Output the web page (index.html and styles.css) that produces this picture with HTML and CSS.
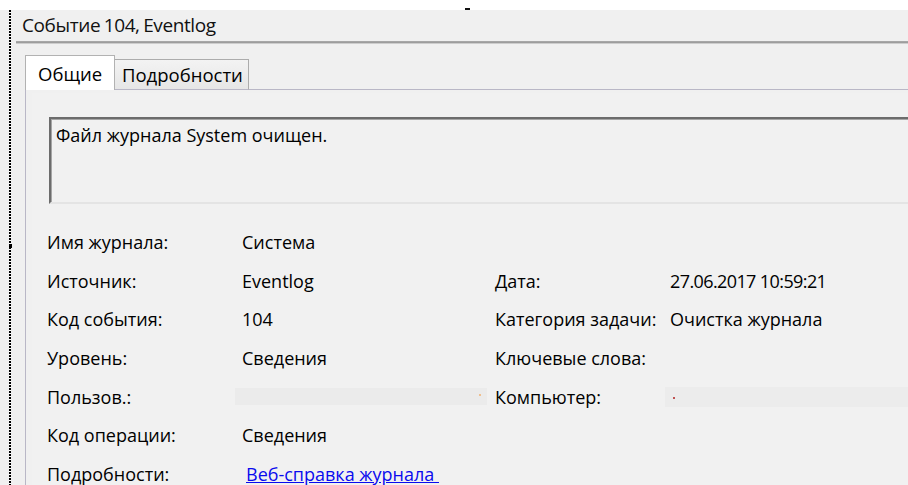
FILE: index.html
```html
<!DOCTYPE html>
<html lang="ru">
<head>
<meta charset="utf-8">
<title>Событие 104, Eventlog</title>
<link rel="stylesheet" href="styles.css">
</head>
<body>
<div class="topstrip"><span class="grip-top"></span></div>
<div class="window">
  <span class="grip-side"></span>
  <div class="caption">Событие 104, Eventlog</div>
  <div class="sep"></div>
  <div class="tabs">
    <div class="tab active">Общие</div>
    <div class="tab">Подробности</div>
    <div class="tab-fill"></div>
  </div>
  <div class="panel">
    <div class="panel-inner">
      <div class="message">Файл журнала System очищен.</div>
      <div class="fields">
        <div class="lbl">Имя журнала:</div><div class="val">Система</div><div class="lbl"></div><div class="val"></div>
        <div class="lbl">Источник:</div><div class="val">Eventlog</div><div class="lbl">Дата:</div><div class="val num">27.06.2017 10:59:21</div>
        <div class="lbl">Код события:</div><div class="val">104</div><div class="lbl">Категория задачи:</div><div class="val">Очистка журнала</div>
        <div class="lbl">Уровень:</div><div class="val">Сведения</div><div class="lbl">Ключевые слова:</div><div class="val"></div>
        <div class="lbl">Пользов.:</div><div class="val"><span class="hidden-user"></span></div><div class="lbl"><span class="speck orange"></span>Компьютер:</div><div class="val"><span class="hidden-host"><span class="speck red"></span></span></div>
        <div class="lbl">Код операции:</div><div class="val">Сведения</div><div class="lbl"></div><div class="val"></div>
        <div class="lbl">Подробности:</div><div class="val"><a class="link" href="#">Веб-справка журнала&nbsp;</a></div><div class="lbl"></div><div class="val"></div>
      </div>
    </div>
  </div>
</div>
</body>
</html>
```
FILE: styles.css
```css
html, body {
  margin: 0;
  padding: 0;
  background: #f0f0f0;
  font-family: "Open Sans", "Noto Sans", sans-serif;
  font-size: 18px;
  color: #000;
  overflow: hidden;
  width: 908px;
  height: 485px;
}

.topstrip {
  height: 10px;
  background: #fff;
  position: relative;
}

.grip-top {
  position: absolute;
  left: 465px;
  top: 8px;
  width: 5px;
  height: 2px;
  background: #111;
}

/* dotted selection edge down the left side */
.window {
  position: relative;
  display: flex;
  flex-direction: column;
  margin-left: 9px;
  padding-left: 2px;
  height: 475px;
  background-image: repeating-linear-gradient(to bottom, #000 0 2px, #fff 2px 3px);
  background-size: 2px 100%;
  background-repeat: no-repeat;
  background-color: #f0f0f0;
}

.grip-side {
  position: absolute;
  left: 0;
  top: 234px;
  width: 3px;
  height: 4px;
  background: #000;
}

.caption {
  height: 31px;
  line-height: 30px;
  padding-left: 11px;
  font-size: 19px;
  color: #111;
  letter-spacing: -0.4px;
  word-spacing: -1px;
}

.sep {
  margin-left: 5px;
  height: 1px;
  background: #9d9d9d;
  border-top: 1px solid #a7a7a7;
  border-bottom: 1px solid #cdcdcd;
}

.tabs {
  display: flex;
  align-items: flex-end;
  margin-top: 11px;
  margin-left: 14px;
  height: 35px;
  font-size: 18.5px;
}

.tab {
  box-sizing: border-box;
  height: 31px;
  padding: 0 5px 0 7px;
  line-height: 30px;
  border: 1px solid #acacac;
  background: linear-gradient(to bottom, #f3f3f3, #e6e6e6);
  color: #000;
  margin-left: -1px;
  border-bottom: 1px solid #b9b7c6;
}

.tab.active {
  height: 35px;
  width: 90px;
  margin-left: 0;
  padding-left: 12px;
  line-height: 36px;
  background: #fff;
  border-color: #b2b2b2;
  border-bottom: none;
  position: relative;
  z-index: 1;
}

.tab-fill {
  flex: 1;
  height: 1px;
  background: #b9b7c6;
}

.panel {
  flex: 1;
  min-height: 0;
  margin-left: 14px;
  border-left: 1px solid #b9b7c6;
  padding: 3px 0 0 6px;
  overflow: hidden;
}

.panel-inner {
  background: #f1f1f1;
  height: 100%;
  padding-top: 24px;
  padding-left: 17px;
  box-sizing: border-box;
}

.message {
  box-sizing: border-box;
  height: 87px;
  border-top: 2px solid #6c6c6c;
  border-left: 2px solid #6c6c6c;
  border-bottom: 2px solid #e4e4e4;
  box-shadow: inset 1px 1px 0 #a5a5a5;
  padding: 4px 0 0 5px;
}

.fields {
  display: grid;
  grid-template-columns: 195px 253px 175px 1fr;
  grid-auto-rows: 38.6px;
  align-items: center;
  margin-top: 19px;
  margin-left: -2px;
}

.lbl, .val {
  white-space: nowrap;
  position: relative;
}

.num {
  letter-spacing: -0.6px;
}

.hidden-user {
  display: block;
  margin-left: -7px;
  width: 252px;
  height: 17px;
  background: #ebebeb;
}

.hidden-host {
  display: block;
  margin-left: -5px;
  height: 20px;
  background: #ececec;
  position: relative;
}

.speck {
  position: absolute;
  width: 2px;
  height: 2px;
  border-radius: 1px;
}

.speck.red {
  left: 8px;
  top: 10px;
  background: #b02020;
}

.speck.orange {
  left: -16px;
  top: 9px;
  background: #f0b070;
}

.link {
  margin-left: 4px;
  color: #0a0aee;
  text-decoration: underline;
}
```
